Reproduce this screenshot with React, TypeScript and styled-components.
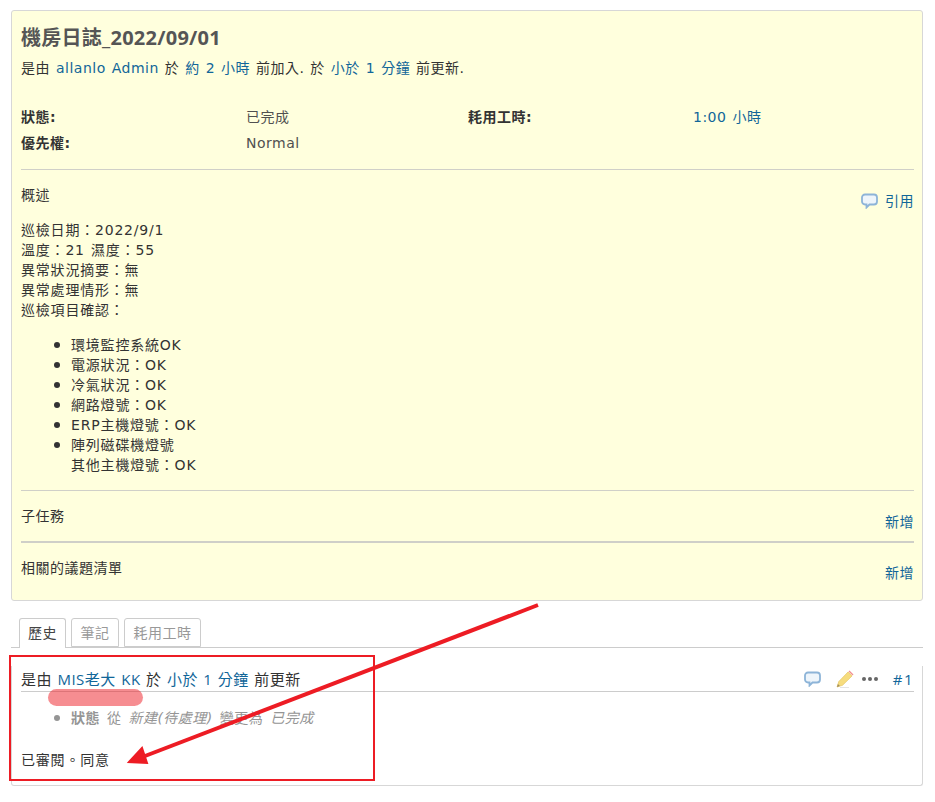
import React, { FC } from "react";
import styled, { createGlobalStyle } from "styled-components";

const GlobalStyle = createGlobalStyle`
  html, body {
    margin: 0;
    padding: 0;
    background: #fff;
  }
  body {
    font-family: "DejaVu Sans", "Noto Sans CJK TC", sans-serif;
    font-size: 14px;
    letter-spacing: 0.5px;
    word-spacing: 1px;
    color: #333;
  }
`;

const Page = styled.div`
  position: relative;
  width: 935px;
  height: 802px;
  padding: 10px 12px 0 11px;
  box-sizing: border-box;
  overflow: hidden;
`;

const IssueCard = styled.div`
  height: 591px;
  box-sizing: border-box;
  padding: 13px 8px 0 9px;
  background: #ffffdd;
  border: 1px solid #d7d7d7;
  border-radius: 3px;
`;

const Title = styled.h3`
  margin: 0;
  height: 28px;
  line-height: 28px;
  font-family: "Open Sans", "Noto Sans CJK TC", sans-serif;
  font-size: 20px;
  font-weight: bold;
  letter-spacing: 0.25px;
  color: #555;
`;

const Author = styled.p`
  margin: 6px 0 0;
  line-height: 20px;
  height: 20px;
`;

const A = styled.span`
  color: #169;
`;

const Attributes = styled.div`
  margin-top: 26px;
  display: grid;
  grid-template-columns: 225px 222px 225px 1fr;
  grid-auto-rows: 26px;
  line-height: 26px;
  padding-bottom: 13px;
  border-bottom: 1px solid #d0d0c8;
`;

const AttrLabel = styled.div`
  font-weight: bold;
  color: #333;
`;

const AttrValue = styled.div<{ $link?: boolean }>`
  color: ${(p) => (p.$link ? "#169" : "#505050")};
`;

const SectionHead = styled.div`
  height: 20px;
  display: flex;
  justify-content: space-between;
  align-items: flex-start;
`;

const SectionTitle = styled.div`
  line-height: 20px;
  color: #333;
`;

const Action = styled.span`
  display: inline-flex;
  align-items: center;
  gap: 7px;
  margin-top: 6px;
  color: #169;
  font-size: 14px;
  line-height: 20px;
`;

const Description = styled.div`
  padding-top: 15px;
  height: 321px;
  box-sizing: border-box;
  border-bottom: 1px solid #d0d0c8;
`;

const DescText = styled.div`
  margin-top: 15px;
  line-height: 20px;
  letter-spacing: 0.8px;
  color: #333;
`;

const Bullets = styled.ul`
  margin: 15px 0 0;
  padding-left: 50px;
  list-style: none;
  line-height: 20px;
  letter-spacing: 0.8px;
  color: #333;
`;

const Bullet = styled.li<{ $color?: string }>`
  position: relative;
  &::before {
    content: "";
    position: absolute;
    left: -17px;
    top: 7px;
    width: 6px;
    height: 6px;
    border-radius: 50%;
    background: ${(p) => p.$color || "#333"};
  }
`;

const SubSection = styled.div<{ $thick?: boolean; $h: number }>`
  height: ${(p) => p.$h}px;
  box-sizing: border-box;
  padding-top: 15px;
  display: flex;
  justify-content: space-between;
  ${(p) => (p.$thick ? "border-bottom: 2px solid #cfcfc8;" : "")}
`;

const AddLink = styled.span<{ $offset: number }>`
  color: #169;
  font-size: 14px;
  line-height: 20px;
  align-self: flex-start;
  margin-top: ${(p) => p.$offset}px;
`;

const Tabs = styled.div`
  margin-top: 17px;
  height: 30px;
  box-sizing: border-box;
  display: flex;
  gap: 5px;
  padding-left: 8px;
  border-bottom: 1px solid #ccc;
`;

const Tab = styled.div<{ $active?: boolean }>`
  height: 29px;
  line-height: 28px;
  padding: 0 ${(p) => (p.$active ? "8px" : "8.5px")};
  font-size: 14px;
  box-sizing: ${(p) => (p.$active ? "content-box" : "border-box")};
  border: 1px solid #ccc;
  border-bottom: ${(p) => (p.$active ? "none" : "1px solid #ccc")};
  border-radius: 3px 3px 0 0;
  background: #fff;
  color: ${(p) => (p.$active ? "#444" : "#999")};
  ${(p) => (p.$active ? "position: relative; z-index: 1; margin-bottom: -1px;" : "")}
`;

const Journal = styled.div`
  margin-top: 18px;
  height: 120px;
  box-sizing: border-box;
  padding: 0 8px 0 9px;
  border: 1px solid #d7d7d7;
  border-top: none;
  border-radius: 0 0 3px 3px;
`;

const JournalHead = styled.div`
  height: 25px;
  line-height: 24px;
  border-bottom: 1px solid #ccc;
  display: flex;
  justify-content: space-between;
  align-items: center;
  font-family: "Open Sans", "Noto Sans CJK TC", sans-serif;
  font-size: 15px;
`;

const JournalTools = styled.div`
  display: flex;
  align-items: center;
  color: #169;
  letter-spacing: 1.5px;
`;

const ToolGap = styled.span`
  width: 15px;
`;

const Dots = styled.span`
  display: inline-flex;
  gap: 2px;
  margin: 0 15px 0 8px;
`;

const Dot = styled.i`
  width: 4px;
  height: 4px;
  border-radius: 50%;
  background: #666;
`;

const Details = styled.ul`
  margin: 16px 0 0;
  padding-left: 50px;
  list-style: none;
  line-height: 20px;
  word-spacing: 2px;
  color: #959595;
`;

const DetailLabel = styled.strong`
  font-weight: bold;
`;

const Note = styled.p`
  margin: 22px 0 0;
  line-height: 20px;
  letter-spacing: 0.8px;
  color: #333;
`;

const RedBox = styled.div`
  position: absolute;
  left: 9px;
  top: 655px;
  width: 366px;
  height: 126px;
  box-sizing: border-box;
  border: 2px solid #ed1c24;
`;

const Blur = styled.div`
  position: absolute;
  left: 48px;
  top: 689px;
  width: 95px;
  height: 17px;
  border-radius: 9px;
  background: rgba(237, 28, 36, 0.5);
`;

const Overlay = styled.svg`
  position: absolute;
  left: 0;
  top: 0;
  pointer-events: none;
`;

const CommentIcon: FC = () => (
  <svg width="17" height="16" viewBox="0 0 17 16">
    <path
      d="M4 1.500h9a3 3 0 0 1 3 3v4a3 3 0 0 1-3 3H8.500L5.500 14.500v-3H4a3 3 0 0 1-3-3v-4a3 3 0 0 1 3-3z"
      fill="#eef5fb"
      stroke="#8db4d8"
      strokeWidth="1.8"
    />
  </svg>
);

const PencilIcon: FC = () => (
  <svg width="18" height="18" viewBox="0 0 18 18">
    <path d="M4 17.500h9" stroke="#e4e4e4" strokeWidth="1" />
    <path d="M1 17l1.800-5.500L12 2l4 4-9.500 9.300z" fill="#f6dc7e" stroke="#e0bf55" strokeWidth="0.6" />
    <path d="M12.500 1.500l1-1 4 4-1 1z" fill="#f2908f" />
    <path d="M1 17l.9-2.900 2 2z" fill="#a08c60" />
  </svg>
);

const App: FC = () => {
  return (
    <Page>
      <GlobalStyle />
      <IssueCard>
        <Title>機房日誌_2022/09/01</Title>
        <Author>
          是由 <A>allanlo Admin</A> 於 <A>約 2 小時</A> 前加入. 於 <A>小於 1 分鐘</A> 前更新.
        </Author>
        <Attributes>
          <AttrLabel>狀態:</AttrLabel>
          <AttrValue>已完成</AttrValue>
          <AttrLabel>耗用工時:</AttrLabel>
          <AttrValue $link>1:00 小時</AttrValue>
          <AttrLabel>優先權:</AttrLabel>
          <AttrValue>Normal</AttrValue>
        </Attributes>
        <Description>
          <SectionHead>
            <SectionTitle>概述</SectionTitle>
            <Action>
              <CommentIcon />
              引用
            </Action>
          </SectionHead>
          <DescText>
            巡檢日期：2022/9/1
            <br />
            溫度：21 濕度：55
            <br />
            異常狀況摘要：無
            <br />
            異常處理情形：無
            <br />
            巡檢項目確認：
          </DescText>
          <Bullets>
            <Bullet>環境監控系統OK</Bullet>
            <Bullet>電源狀況：OK</Bullet>
            <Bullet>冷氣狀況：OK</Bullet>
            <Bullet>網路燈號：OK</Bullet>
            <Bullet>ERP主機燈號：OK</Bullet>
            <Bullet>
              陣列磁碟機燈號
              <br />
              其他主機燈號：OK
            </Bullet>
          </Bullets>
        </Description>
        <SubSection $thick $h={52}>
          <SectionTitle>子任務</SectionTitle>
          <AddLink $offset={6}>新增</AddLink>
        </SubSection>
        <SubSection $h={58}>
          <SectionTitle>相關的議題清單</SectionTitle>
          <AddLink $offset={5}>新增</AddLink>
        </SubSection>
      </IssueCard>

      <Tabs>
        <Tab $active>歷史</Tab>
        <Tab>筆記</Tab>
        <Tab>耗用工時</Tab>
      </Tabs>

      <Journal>
        <JournalHead>
          <span>
            是由 <A>MIS老大 KK</A> 於 <A>小於 1 分鐘</A> 前更新
          </span>
          <JournalTools>
            <CommentIcon />
            <ToolGap />
            <PencilIcon />
            <Dots>
              <Dot />
              <Dot />
              <Dot />
            </Dots>
            #1
          </JournalTools>
        </JournalHead>
        <Details>
          <Bullet $color="#959595">
            <DetailLabel>狀態</DetailLabel> 從 <i>新建(待處理)</i> 變更為 <i>已完成</i>
          </Bullet>
        </Details>
        <Note>已審閱。同意</Note>
      </Journal>

      <Blur />
      <RedBox />
      <Overlay width="935" height="802" viewBox="0 0 935 802">
        <line x1="538" y1="605" x2="145" y2="756" stroke="#ed1c24" strokeWidth="4" />
        <path d="M129 762L142 748L147 763z" fill="#ed1c24" stroke="#ed1c24" strokeWidth="2" />
      </Overlay>
    </Page>
  );
};

export default App;
